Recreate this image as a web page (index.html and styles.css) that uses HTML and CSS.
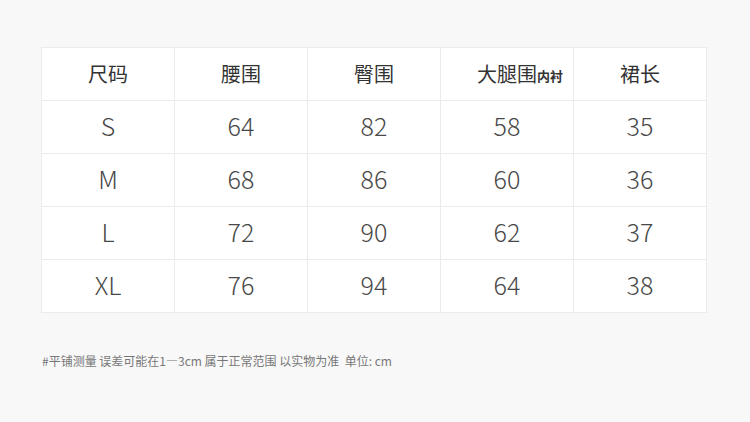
FILE: index.html
```html
<!DOCTYPE html>
<html lang="zh-CN">
<head>
<meta charset="utf-8">
<link rel="stylesheet" href="styles.css">
</head>
<body>
<div class="page">
  <div class="table">
    <div class="cell head">尺码</div>
    <div class="cell head">腰围</div>
    <div class="cell head">臀围</div>
    <div class="cell head thigh">大腿围<span class="sub">内衬</span></div>
    <div class="cell head">裙长</div>

    <div class="cell">S</div><div class="cell">64</div><div class="cell">82</div><div class="cell">58</div><div class="cell">35</div>
    <div class="cell">M</div><div class="cell">68</div><div class="cell">86</div><div class="cell">60</div><div class="cell">36</div>
    <div class="cell">L</div><div class="cell">72</div><div class="cell">90</div><div class="cell">62</div><div class="cell">37</div>
    <div class="cell">XL</div><div class="cell">76</div><div class="cell">94</div><div class="cell">64</div><div class="cell">38</div>
  </div>
  <p class="note">#平铺测量 误差可能在1—3cm 属于正常范围 以实物为准&nbsp; 单位: cm</p>
</div>
</body>
</html>
```
FILE: styles.css
```css
html, body {
  margin: 0;
  padding: 0;
  background: #f8f8f8;
}
.page {
  width: 750px;
  height: 422px;
  box-sizing: border-box;
  padding: 47px 0 0 41px;
  font-family: "Noto Sans CJK SC", "Noto Sans", sans-serif;
}
.table {
  display: grid;
  grid-template-columns: repeat(5, 132px);
  grid-auto-rows: 52px;
  gap: 1px;
  padding: 1px;
  background: #ebebeb;
  width: max-content;
}
.cell {
  background: #fff;
  display: flex;
  align-items: center;
  justify-content: center;
  padding-bottom: 3px;
  box-sizing: border-box;
  font-family: "Noto Sans CJK SC Light", "Noto Sans CJK SC", sans-serif;
  font-size: 25px;
  font-weight: 300;
  color: #484848;
  line-height: 1;
}
.head {
  font-family: "Noto Sans CJK SC", sans-serif;
  font-size: 20px;
  font-weight: 400;
  color: #333;
  padding-bottom: 1px;
}
.thigh {
  padding-left: 26px;
}
.sub {
  font-size: 13px;
  font-weight: 700;
  margin-top: 3px;
}
.note {
  margin: 40px 0 0 1px;
  font-size: 12px;
  color: #777;
  line-height: 16px;
}
```
